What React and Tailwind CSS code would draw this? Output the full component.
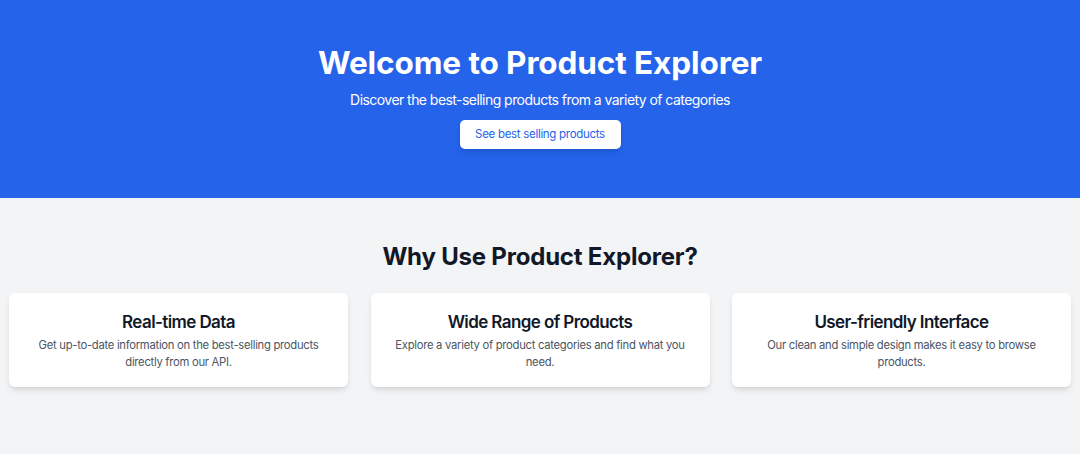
export default function App() {
  const features = [
    { t: "Real-time Data", d: "Get up-to-date information on the best-selling products directly from our API." },
    { t: "Wide Range of Products", d: "Explore a variety of product categories and find what you need." },
    { t: "User-friendly Interface", d: "Our clean and simple design makes it easy to browse products." },
  ];
  return (
    <div className="min-h-[454px] bg-[#f3f4f6] font-['Inter',sans-serif]">
      <section className="bg-[#2563eb] text-white text-center pt-[45px] pb-[49px] flex flex-col items-center">
        <h1 className="text-[31.5px] font-bold leading-[36px] tracking-[-0.1px]">Welcome to Product Explorer</h1>
        <p className="text-[14px] leading-[20px] tracking-[-0.55px] mt-[9px]">Discover the best-selling products from a variety of categories</p>
        <button className="mt-[10px] bg-white text-[#2563eb] text-[11.5px] tracking-[-0.3px] rounded-[5px] w-[161px] h-[29px] shadow-md">See best selling products</button>
      </section>
      <section className="px-[9px] pt-[43px] pb-10">
        <h2 className="text-[24px] font-bold text-center text-[#111827] leading-[32px] tracking-[-0.2px] mb-[20px]">Why Use Product Explorer?</h2>
        <div className="grid grid-cols-3 gap-[22.5px]">
          {features.map((f) => (
            <div key={f.t} className="bg-white rounded-md shadow-md px-[20px] pt-[17px] pb-[17px] text-center h-[94px]">
              <h3 className="text-[17px] font-semibold text-[#111827] leading-[24px] tracking-[-0.6px]">{f.t}</h3>
              <p className="text-[11.25px] text-[#4b5563] leading-[17px] tracking-[-0.28px] mt-[3px]">{f.d}</p>
            </div>
          ))}
        </div>
      </section>
    </div>
  );
}
